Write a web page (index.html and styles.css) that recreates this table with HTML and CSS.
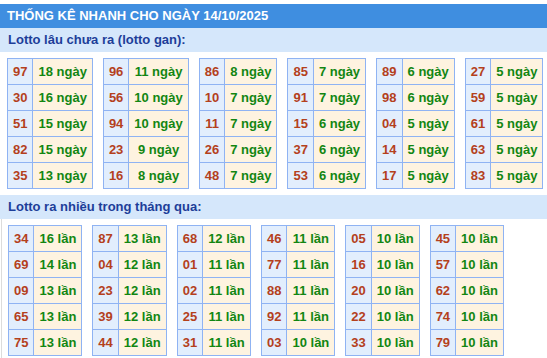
FILE: index.html
```html
<!DOCTYPE html>
<html lang="vi">
<head>
<meta charset="utf-8">
<title>Thống kê nhanh</title>
<link rel="stylesheet" href="styles.css">
</head>
<body>
<div class="title">THỐNG KÊ NHANH CHO NGÀY 14/10/2025</div>
<div class="band">Lotto lâu chưa ra (lotto gan):</div>
<div class="grid">
  <table class="tk"><tr><td class="n">97</td><td class="v">18 ngày</td></tr><tr><td class="n">30</td><td class="v">16 ngày</td></tr><tr><td class="n">51</td><td class="v">15 ngày</td></tr><tr><td class="n">82</td><td class="v">15 ngày</td></tr><tr><td class="n">35</td><td class="v">13 ngày</td></tr></table>
  <table class="tk"><tr><td class="n">96</td><td class="v">11 ngày</td></tr><tr><td class="n">56</td><td class="v">10 ngày</td></tr><tr><td class="n">94</td><td class="v">10 ngày</td></tr><tr><td class="n">23</td><td class="v">9 ngày</td></tr><tr><td class="n">16</td><td class="v">8 ngày</td></tr></table>
  <table class="tk"><tr><td class="n">86</td><td class="v">8 ngày</td></tr><tr><td class="n">10</td><td class="v">7 ngày</td></tr><tr><td class="n">11</td><td class="v">7 ngày</td></tr><tr><td class="n">26</td><td class="v">7 ngày</td></tr><tr><td class="n">48</td><td class="v">7 ngày</td></tr></table>
  <table class="tk"><tr><td class="n">85</td><td class="v">7 ngày</td></tr><tr><td class="n">91</td><td class="v">7 ngày</td></tr><tr><td class="n">15</td><td class="v">6 ngày</td></tr><tr><td class="n">37</td><td class="v">6 ngày</td></tr><tr><td class="n">53</td><td class="v">6 ngày</td></tr></table>
  <table class="tk"><tr><td class="n">89</td><td class="v">6 ngày</td></tr><tr><td class="n">98</td><td class="v">6 ngày</td></tr><tr><td class="n">04</td><td class="v">5 ngày</td></tr><tr><td class="n">14</td><td class="v">5 ngày</td></tr><tr><td class="n">17</td><td class="v">5 ngày</td></tr></table>
  <table class="tk"><tr><td class="n">27</td><td class="v">5 ngày</td></tr><tr><td class="n">59</td><td class="v">5 ngày</td></tr><tr><td class="n">61</td><td class="v">5 ngày</td></tr><tr><td class="n">63</td><td class="v">5 ngày</td></tr><tr><td class="n">83</td><td class="v">5 ngày</td></tr></table>
</div>
<div class="band">Lotto ra nhiều trong tháng qua:</div>
<div class="grid grid-last">
  <table class="tk"><tr><td class="n">34</td><td class="v">16 lần</td></tr><tr><td class="n">69</td><td class="v">14 lần</td></tr><tr><td class="n">09</td><td class="v">13 lần</td></tr><tr><td class="n">65</td><td class="v">13 lần</td></tr><tr><td class="n">75</td><td class="v">13 lần</td></tr></table>
  <table class="tk"><tr><td class="n">87</td><td class="v">13 lần</td></tr><tr><td class="n">04</td><td class="v">12 lần</td></tr><tr><td class="n">23</td><td class="v">12 lần</td></tr><tr><td class="n">39</td><td class="v">12 lần</td></tr><tr><td class="n">44</td><td class="v">12 lần</td></tr></table>
  <table class="tk"><tr><td class="n">68</td><td class="v">12 lần</td></tr><tr><td class="n">01</td><td class="v">11 lần</td></tr><tr><td class="n">02</td><td class="v">11 lần</td></tr><tr><td class="n">25</td><td class="v">11 lần</td></tr><tr><td class="n">31</td><td class="v">11 lần</td></tr></table>
  <table class="tk"><tr><td class="n">46</td><td class="v">11 lần</td></tr><tr><td class="n">77</td><td class="v">11 lần</td></tr><tr><td class="n">88</td><td class="v">11 lần</td></tr><tr><td class="n">92</td><td class="v">11 lần</td></tr><tr><td class="n">03</td><td class="v">10 lần</td></tr></table>
  <table class="tk"><tr><td class="n">05</td><td class="v">10 lần</td></tr><tr><td class="n">16</td><td class="v">10 lần</td></tr><tr><td class="n">20</td><td class="v">10 lần</td></tr><tr><td class="n">22</td><td class="v">10 lần</td></tr><tr><td class="n">33</td><td class="v">10 lần</td></tr></table>
  <table class="tk"><tr><td class="n">45</td><td class="v">10 lần</td></tr><tr><td class="n">57</td><td class="v">10 lần</td></tr><tr><td class="n">62</td><td class="v">10 lần</td></tr><tr><td class="n">74</td><td class="v">10 lần</td></tr><tr><td class="n">79</td><td class="v">10 lần</td></tr></table>
</div>
</body>
</html>
```

FILE: styles.css
```css
html, body {
  margin: 0;
  padding: 0;
  background: #ffffff;
}
body {
  padding-top: 4px;
  font-family: "Liberation Sans", Arial, sans-serif;
  font-size: 13px;
  font-weight: bold;
}
.title {
  height: 24px;
  line-height: 24px;
  padding-left: 7px;
  background: #3f8ee0;
  color: #ffffff;
  font-size: 13px;
}
.band {
  height: 24px;
  line-height: 24px;
  padding-left: 8px;
  background: #d5e7fb;
  color: #1d3e99;
  font-size: 13px;
}
.grid {
  display: flex;
  align-items: flex-start;
  gap: 10px;
  padding: 6px 0 6px 7px;
}
.grid-last {
  margin-left: 1px;
  padding-left: 6px;
  padding-bottom: 2px;
  border-left: 1px solid #dcdcdc;
}
.tk {
  border-collapse: collapse;
  flex: none;
}
.tk td {
  border: 1px solid #8fb3f3;
  padding: 5px 5px;
  line-height: 15px;
  text-align: center;
  white-space: nowrap;
}
.tk .n {
  background: #e2eefd;
  color: #b4401c;
}
.tk .v {
  background: #fef3e0;
  color: #128612;
}
```
